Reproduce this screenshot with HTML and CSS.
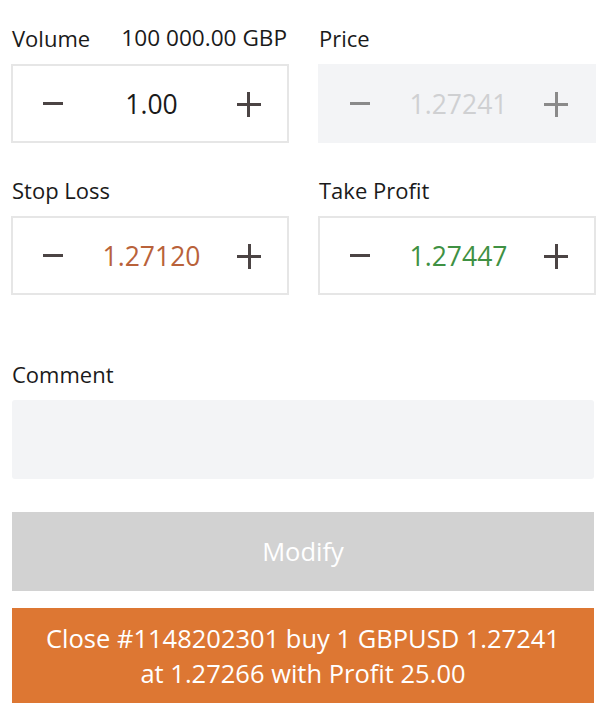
FILE: index.html
```html
<!DOCTYPE html>
<html>
<head>
<meta charset="utf-8">
<link rel="stylesheet" href="styles.css">
</head>
<body>
<div class="form">
  <div class="grid">
    <div class="field">
      <div class="label split"><span>Volume</span><span class="amount">100 000.00 GBP</span></div>
      <div class="spin">
        <span class="minus"></span>
        <span class="value">1.00</span>
        <span class="plus"></span>
      </div>
    </div>
    <div class="field">
      <div class="label">Price</div>
      <div class="spin disabled">
        <span class="minus"></span>
        <span class="value">1.27241</span>
        <span class="plus"></span>
      </div>
    </div>
    <div class="field">
      <div class="label">Stop Loss</div>
      <div class="spin">
        <span class="minus"></span>
        <span class="value sl">1.27120</span>
        <span class="plus"></span>
      </div>
    </div>
    <div class="field">
      <div class="label">Take Profit</div>
      <div class="spin">
        <span class="minus"></span>
        <span class="value tp">1.27447</span>
        <span class="plus"></span>
      </div>
    </div>
  </div>
  <div class="comment">
    <div class="label">Comment</div>
    <div class="input"></div>
  </div>
  <div class="btn modify">Modify</div>
  <div class="btn close">Close #1148202301 buy 1 GBPUSD 1.27241<br>at 1.27266 with Profit 25.00</div>
</div>
</body>
</html>
```
FILE: styles.css
```css
html, body {
  margin: 0;
  padding: 0;
  background: #ffffff;
}
body {
  font-family: "Open Sans", "Noto Sans", sans-serif;
  color: #1a1a1a;
}
.form {
  padding: 23px 18px 0 11px;
}
.grid {
  display: grid;
  grid-template-columns: 1fr 1fr;
  column-gap: 29px;
  row-gap: 32px;
}
.label {
  font-size: 22px;
  line-height: 30px;
  height: 30px;
  margin-bottom: 11px;
  padding-left: 1px;
}
.split {
  display: flex;
  justify-content: space-between;
  padding-right: 2px;
}
.amount {
  font-size: 22.6px;
}
.spin {
  height: 79px;
  box-sizing: border-box;
  border: 2px solid #e6e6e6;
  display: flex;
  align-items: center;
  justify-content: space-between;
  padding: 0 26px 0 29px;
}
.spin.disabled {
  border-color: #f3f4f6;
  background: #f3f4f6;
}
.value {
  font-size: 26.5px;
  color: #1a1a1a;
}
.value.sl { color: #b9623a; }
.value.tp { color: #3f9143; }
.disabled .value { color: #cfd0d2; }
.minus, .plus {
  position: relative;
  display: block;
  width: 24px;
  height: 24px;
}
.minus::before, .plus::before, .plus::after {
  content: "";
  position: absolute;
  background: #4b4444;
}
.minus::before {
  left: 1px;
  width: 20px;
  top: 10px;
  height: 3px;
}
.plus::before {
  left: 0;
  width: 24px;
  top: 11px;
  height: 3px;
}
.plus::after {
  top: 0;
  height: 25px;
  left: 10.5px;
  width: 3px;
}
.disabled .minus::before, .disabled .plus::before, .disabled .plus::after {
  background: #8a8a8a;
}
.comment {
  margin-top: 64px;
}
.input {
  height: 79px;
  background: #f3f4f6;
  border-radius: 3px;
  margin-left: 1px;
  margin-right: 2px;
}
.btn {
  margin-left: 1px;
  margin-right: 2px;
  color: #ffffff;
  text-align: center;
}
.modify {
  margin-top: 33px;
  height: 79px;
  line-height: 79px;
  background: #d2d2d2;
  font-size: 25.5px;
}
.close {
  margin-top: 17px;
  background: #dd7733;
  font-size: 25.5px;
  line-height: 35px;
  padding: 13px 0 12px;
}
```
